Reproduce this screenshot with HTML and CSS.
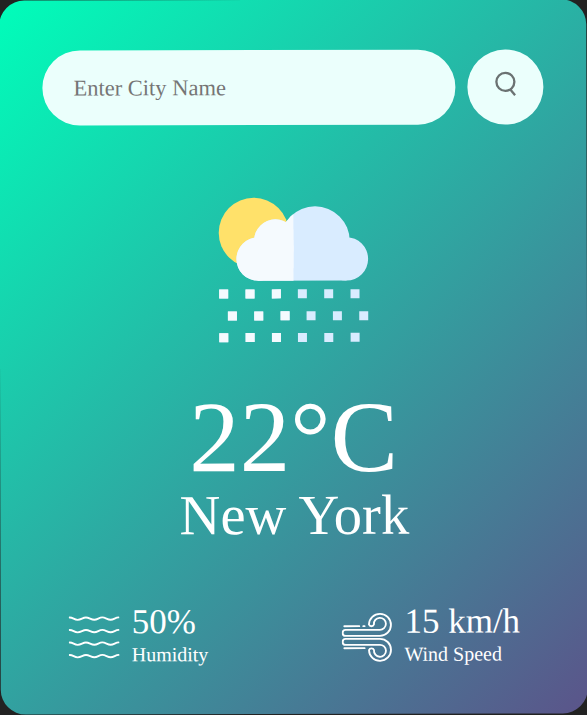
FILE: index.html
```html
<!DOCTYPE html>
<html lang="en">
<head>
<meta charset="utf-8">
<title>Weather</title>
<link rel="stylesheet" href="styles.css">
</head>
<body>
<main class="card">
  <form class="search">
    <input class="search-input" type="text" placeholder="Enter City Name">
    <button class="search-button" type="button" aria-label="Search">
      <svg class="search-icon" viewBox="0 0 66 78" fill="none" stroke="#6b7272" stroke-width="7">
        <circle cx="33" cy="34" r="27"/>
        <path d="M46 55L62 74"/>
      </svg>
    </button>
  </form>
  <section class="weather">
    <svg class="weather-icon" viewBox="0 0 540 510">
      <defs>
        <clipPath id="left"><path d="M0 0H266V510H0Z"/></clipPath>
        <g id="cloud">
          <circle cx="331" cy="168" r="104"/>
          <circle cx="212" cy="167" r="64"/>
          <circle cx="160" cy="222" r="65"/>
          <circle cx="425" cy="222" r="65"/>
          <path d="M160 165H425V287H160Z"/>
        </g>
        <path id="row" d="M43 0h27v27h-27zM122 0h27v27h-27zM201 0h27v27h-27zM279 0h27v27h-27zM358 0h27v27h-27zM437 0h27v27h-27z"/>
      </defs>
      <circle cx="147" cy="143" r="105" fill="#ffe16a"/>
      <g id="rain" fill="#d9ecff">
        <use href="#cloud"/>
        <use href="#row" y="313"/>
        <use href="#row" x="26" y="379"/>
        <use href="#row" y="444"/>
      </g>
      <g clip-path="url(#left)" fill="#f5fafe">
        <use href="#cloud"/>
        <use href="#row" y="313"/>
        <use href="#row" x="26" y="379"/>
        <use href="#row" y="444"/>
      </g>
    </svg>
    <h1 class="temp">22°C</h1>
    <h2 class="city">New York</h2>
  </section>
  <section class="details">
    <div class="detail">
      <svg class="detail-icon" viewBox="0 0 153 153" fill="none" stroke="#fff" stroke-width="5.500" stroke-linecap="round">
        <path id="wave" d="M3 15C14 15 16 22 27 22S42 15 52 15S67 22 77 22S91 15 101 15S116 22 126 22S140 15 150 15"/>
        <use href="#wave" y="37.5"/>
        <use href="#wave" y="75"/>
        <use href="#wave" y="112.500"/>
      </svg>
      <div>
        <p class="value">50%</p>
        <p class="label">Humidity</p>
      </div>
    </div>
    <div class="detail">
      <svg class="detail-icon" viewBox="0 0 153 153" fill="none" stroke="#fff" stroke-width="5.500" stroke-linecap="round" stroke-linejoin="round">
        <g id="gust">
          <path d="M12 54H114A18 18 0 1 0 97 38A8 8 0 0 1 82 38A33 33 0 1 1 115 72H12A9 9 0 0 1 12 54"/>
        </g>
        <use href="#gust" transform="translate(0 153) scale(1 -1)"/>
        <path d="M8 43H53M65 43H69M8 109H69"/>
      </svg>
      <div>
        <p class="value">15 km/h</p>
        <p class="label">Wind Speed</p>
      </div>
    </div>
  </section>
</main>
</body>
</html>
```
FILE: styles.css
```css
* {
  box-sizing: border-box;
  margin: 0;
  padding: 0;
}

body {
  height: 715px;
  overflow: hidden;
  background: #222;
  font-family: "Liberation Serif", serif;
}

.card {
  width: 587px;
  height: 714px;
  padding: 50px 43.5px 0 42.5px;
  border-radius: 25px;
  background: linear-gradient(135deg, #00feba, #5b548a);
  color: #fff;
  text-align: center;
  transform: rotate(-0.13deg);
}

.search {
  display: flex;
  justify-content: space-between;
}

.search-input {
  width: 413.5px;
  height: 75px;
  padding: 1px 31.5px 0;
  border: 0;
  outline: 0;
  border-radius: 38px;
  background: #ebfffc;
  font: 22.5px "Liberation Serif", serif;
}

.search-input::placeholder {
  color: #757575;
}

.search-button {
  display: flex;
  justify-content: center;
  width: 75.5px;
  height: 75px;
  padding-top: 21px;
  border: 0;
  border-radius: 50%;
  background: #ebfffc;
}

.search-icon {
  width: 22px;
  height: 26px;
}

.weather {
  display: flex;
  flex-direction: column;
  align-items: center;
  padding-top: 60px;
}

.weather-icon {
  width: 180px;
  height: 170px;
  margin-left: 3px;
}

.temp {
  margin: 32px 0 0 1px;
  font-size: 101px;
  font-weight: 400;
  line-height: 101px;
}

.city {
  margin-left: 2px;
  font-size: 56.6px;
  font-weight: 400;
  line-height: 55px;
}

.details {
  display: flex;
  justify-content: space-between;
  padding: 59px 24px 0 25.5px;
}

.detail {
  display: flex;
  gap: 12px;
  text-align: left;
}

.detail-icon {
  width: 51px;
  height: 51px;
  margin-top: 9.5px;
}

.value {
  font-size: 35px;
  line-height: 40px;
}

.label {
  font-size: 20px;
  line-height: 24px;
}
```
